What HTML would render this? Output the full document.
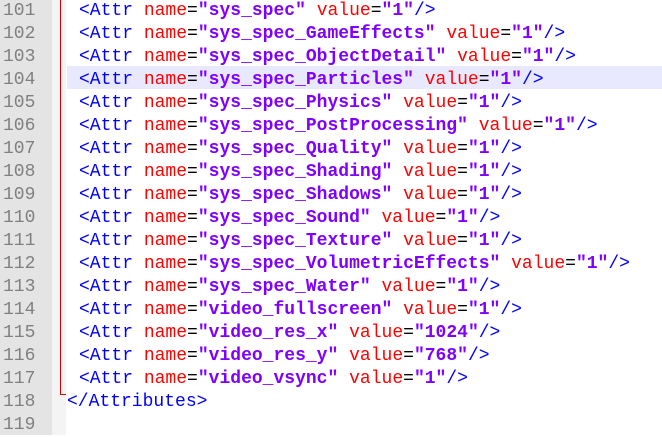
<!DOCTYPE html><html><head><style>
body{margin:0;width:662px;height:435px;overflow:hidden;background:#fff;font-family:"Liberation Mono","Courier New",monospace;font-size:18px;position:relative}
.g{position:absolute;left:0;top:0;width:52px;height:435px;background:#e4e4e4}
.f{position:absolute;left:52px;top:0;width:14px;height:435px;background:#f4f4f4}
.hl{position:absolute;left:67px;top:66px;width:595px;height:23px;background:#e8e8ff}
.wrap{position:absolute;left:0;top:0;width:662px}
.r{height:23px;line-height:23px;white-space:pre;position:relative}
.n{position:absolute;left:3px;top:0;color:#808080}
.c{position:absolute;left:79px;top:0}
.t{color:#0000ff}.a{color:#ff0000}.s{color:#8000ff;font-weight:bold}
</style></head><body>
<div class="g"></div><div class="f"></div><div class="hl"></div>
<div style="position:absolute;left:60px;top:0;width:1px;height:395px;background:#d00"></div>
<div style="position:absolute;left:60px;top:394px;width:6px;height:1px;background:#d00"></div>
<div class="wrap">
<div class="r"><span class="n">101</span><span class="c"><span class="t">&lt;Attr</span> <span class="a">name</span>=<span class="s">"sys_spec"</span> <span class="a">value</span>=<span class="s">"1"</span><span class="t">/&gt;</span></span></div>
<div class="r"><span class="n">102</span><span class="c"><span class="t">&lt;Attr</span> <span class="a">name</span>=<span class="s">"sys_spec_GameEffects"</span> <span class="a">value</span>=<span class="s">"1"</span><span class="t">/&gt;</span></span></div>
<div class="r"><span class="n">103</span><span class="c"><span class="t">&lt;Attr</span> <span class="a">name</span>=<span class="s">"sys_spec_ObjectDetail"</span> <span class="a">value</span>=<span class="s">"1"</span><span class="t">/&gt;</span></span></div>
<div class="r"><span class="n">104</span><span class="c"><span class="t">&lt;Attr</span> <span class="a">name</span>=<span class="s">"sys_spec_Particles"</span> <span class="a">value</span>=<span class="s">"1"</span><span class="t">/&gt;</span></span></div>
<div class="r"><span class="n">105</span><span class="c"><span class="t">&lt;Attr</span> <span class="a">name</span>=<span class="s">"sys_spec_Physics"</span> <span class="a">value</span>=<span class="s">"1"</span><span class="t">/&gt;</span></span></div>
<div class="r"><span class="n">106</span><span class="c"><span class="t">&lt;Attr</span> <span class="a">name</span>=<span class="s">"sys_spec_PostProcessing"</span> <span class="a">value</span>=<span class="s">"1"</span><span class="t">/&gt;</span></span></div>
<div class="r"><span class="n">107</span><span class="c"><span class="t">&lt;Attr</span> <span class="a">name</span>=<span class="s">"sys_spec_Quality"</span> <span class="a">value</span>=<span class="s">"1"</span><span class="t">/&gt;</span></span></div>
<div class="r"><span class="n">108</span><span class="c"><span class="t">&lt;Attr</span> <span class="a">name</span>=<span class="s">"sys_spec_Shading"</span> <span class="a">value</span>=<span class="s">"1"</span><span class="t">/&gt;</span></span></div>
<div class="r"><span class="n">109</span><span class="c"><span class="t">&lt;Attr</span> <span class="a">name</span>=<span class="s">"sys_spec_Shadows"</span> <span class="a">value</span>=<span class="s">"1"</span><span class="t">/&gt;</span></span></div>
<div class="r"><span class="n">110</span><span class="c"><span class="t">&lt;Attr</span> <span class="a">name</span>=<span class="s">"sys_spec_Sound"</span> <span class="a">value</span>=<span class="s">"1"</span><span class="t">/&gt;</span></span></div>
<div class="r"><span class="n">111</span><span class="c"><span class="t">&lt;Attr</span> <span class="a">name</span>=<span class="s">"sys_spec_Texture"</span> <span class="a">value</span>=<span class="s">"1"</span><span class="t">/&gt;</span></span></div>
<div class="r"><span class="n">112</span><span class="c"><span class="t">&lt;Attr</span> <span class="a">name</span>=<span class="s">"sys_spec_VolumetricEffects"</span> <span class="a">value</span>=<span class="s">"1"</span><span class="t">/&gt;</span></span></div>
<div class="r"><span class="n">113</span><span class="c"><span class="t">&lt;Attr</span> <span class="a">name</span>=<span class="s">"sys_spec_Water"</span> <span class="a">value</span>=<span class="s">"1"</span><span class="t">/&gt;</span></span></div>
<div class="r"><span class="n">114</span><span class="c"><span class="t">&lt;Attr</span> <span class="a">name</span>=<span class="s">"video_fullscreen"</span> <span class="a">value</span>=<span class="s">"1"</span><span class="t">/&gt;</span></span></div>
<div class="r"><span class="n">115</span><span class="c"><span class="t">&lt;Attr</span> <span class="a">name</span>=<span class="s">"video_res_x"</span> <span class="a">value</span>=<span class="s">"1024"</span><span class="t">/&gt;</span></span></div>
<div class="r"><span class="n">116</span><span class="c"><span class="t">&lt;Attr</span> <span class="a">name</span>=<span class="s">"video_res_y"</span> <span class="a">value</span>=<span class="s">"768"</span><span class="t">/&gt;</span></span></div>
<div class="r"><span class="n">117</span><span class="c"><span class="t">&lt;Attr</span> <span class="a">name</span>=<span class="s">"video_vsync"</span> <span class="a">value</span>=<span class="s">"1"</span><span class="t">/&gt;</span></span></div>
<div class="r"><span class="n">118</span><span class="c t" style="left:67px">&lt;/Attributes&gt;</span></div>
<div class="r"><span class="n">119</span></div>
</div>
</body></html>
